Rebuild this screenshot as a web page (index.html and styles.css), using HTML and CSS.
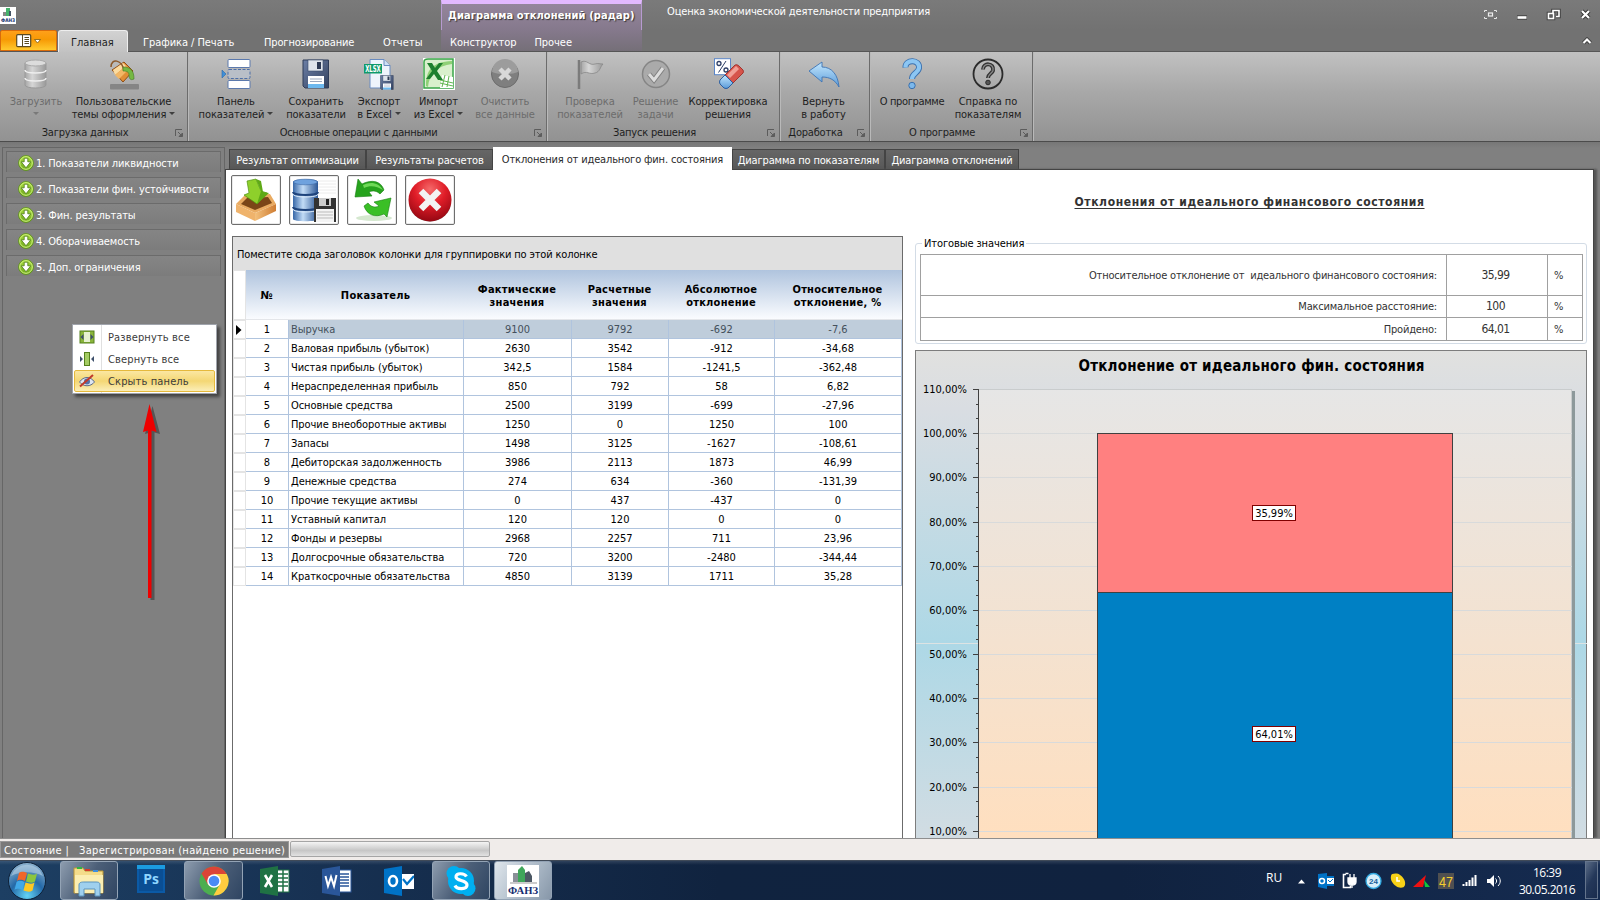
FILE: index.html
```html
<!DOCTYPE html>
<html lang="ru">
<head>
<meta charset="utf-8">
<title>Оценка экономической деятельности предприятия</title>
<link rel="stylesheet" href="styles.css">
</head>
<body>
<svg width="0" height="0" class="defs">
  <defs>
    <linearGradient id="gGreen" x1="0" y1="0" x2="0" y2="1"><stop offset="0" stop-color="#a8dc3c"/><stop offset="1" stop-color="#6fa91c"/></linearGradient>
    <linearGradient id="gBlue" x1="0" y1="0" x2="0" y2="1"><stop offset="0" stop-color="#c4e8ff"/><stop offset="1" stop-color="#5b9bd8"/></linearGradient>
    <linearGradient id="gGray" x1="0" y1="0" x2="1" y2="0"><stop offset="0" stop-color="#a6a6a6"/><stop offset=".35" stop-color="#d6d6d6"/><stop offset="1" stop-color="#9a9a9a"/></linearGradient>
    <linearGradient id="gDb" x1="0" y1="0" x2="1" y2="0"><stop offset="0" stop-color="#3767a8"/><stop offset=".4" stop-color="#c2dcf6"/><stop offset="1" stop-color="#2c5796"/></linearGradient>
    <linearGradient id="gSave" x1="0" y1="0" x2="1" y2="1"><stop offset="0" stop-color="#6c7fa6"/><stop offset="1" stop-color="#34425f"/></linearGradient>
    <linearGradient id="gBox" x1="0" y1="0" x2="1" y2="0"><stop offset="0" stop-color="#f3c07c"/><stop offset="1" stop-color="#cf7d33"/></linearGradient>
    <radialGradient id="gRed" cx=".5" cy=".25" r=".8"><stop offset="0" stop-color="#f56a6a"/><stop offset=".45" stop-color="#e01d28"/><stop offset="1" stop-color="#8c0510"/></radialGradient>
    <radialGradient id="gOrb" cx=".5" cy=".9" r=".9"><stop offset="0" stop-color="#63d4f5"/><stop offset=".5" stop-color="#2469a8"/><stop offset="1" stop-color="#8fb4cf"/></radialGradient>
    <symbol id="plus" viewBox="0 0 16 16"><circle cx="8" cy="8" r="7.400" fill="url(#gGreen)" stroke="#5b9310" stroke-width=".8"/><circle cx="8" cy="8" r="6.300" fill="none" stroke="#d3f287"/><path d="M6.200 3.200h3.600v3.600h3L8 12.800 3.200 6.800h3z" fill="#fff" stroke="#4c7a16" stroke-width=".8"/></symbol>
    <symbol id="dlg" viewBox="0 0 8 8"><path d="M.5 7V.5H7" fill="none" stroke="#5c5c5c"/><path d="M3 3l4 4M7.500 4v3.500H4z" stroke="#5c5c5c" fill="#5c5c5c"/></symbol>
    <symbol id="floppy" viewBox="0 0 28 30"><path d="M1 1h25.500v28H3l-2-2z" fill="url(#gSave)" stroke="#2f3c58"/><rect x="6" y="1" width="15" height="11" fill="#dfe4ec" stroke="#3b4a6a" stroke-width=".6"/><rect x="15" y="3" width="4" height="7" fill="#2d3a55"/><rect x="6" y="17" width="16" height="12" fill="#fff"/><rect x="6" y="25" width="16" height="4" fill="#6cb8ee"/><path d="M8 20h12M8 22.500h12" stroke="#9aa7bd"/></symbol>
  </defs>
</svg>

<div class="app">
  <header class="titlebar">
    <div class="logo"><svg width="16" height="17" viewBox="0 0 16 17"><rect width="16" height="17" fill="#fff"/><rect x="3" y="5" width="3" height="4" fill="#888"/><rect x="6" y="1" width="4" height="8" fill="#45b36b"/><rect x="9" y="4" width="2" height="5" fill="#456"/><text x="1" y="14.500" class="logo-t" textLength="14" lengthAdjust="spacingAndGlyphs">ФАНЗ</text></svg></div>
    <div class="ctx">Диаграмма отклонений (радар)</div>
    <div class="apptitle">Оценка экономической деятельности предприятия</div>
    <div class="winbtns">
      <svg width="110" height="14" viewBox="0 0 110 14" fill="none" stroke="#fff">
        <path d="M.5 4V2.500H3M10 2.500h2.500V4M.5 9v1.500H3M10 10.500h2.500V9" stroke="#e6e6e6"/><rect x="4.500" y="5" width="4" height="3" stroke="#eee" stroke-width="1.200"/>
        <path d="M33 9.500h10" stroke="#444" stroke-width="4.500"/><path d="M33.500 9.500h9" stroke-width="2.600"/>
        <path d="M69 5V2.500h6v6h-3M64.500 5.500h5v5h-5z" stroke="#444" stroke-width="3.600"/><path d="M69 5V2.500h6v6h-3" stroke-width="1.600"/><rect x="64.500" y="5.500" width="5" height="5" stroke-width="1.600"/>
        <path d="M98 3l7 7M105 3l-7 7" stroke="#333" stroke-width="4"/><path d="M98 3l7 7M105 3l-7 7" stroke-width="2.200"/>
      </svg>
    </div>
  </header>
  <nav class="tabs">
    <div class="filebtn"><svg width="26" height="14" viewBox="0 0 26 14"><rect x=".7" y=".7" width="14" height="12" rx="1" fill="#fff" stroke="#5b4a20" stroke-width="1.200"/><path d="M6.500 1v12" stroke="#5b4a20"/><path d="M8.500 3.500h4.500M8.500 5.500h4.500M8.500 7.500h4.500M8.500 9.500h4.500" stroke="#5b4a20"/><path d="M18.500 5.500h6L21.500 9z" fill="#fff" stroke="#7a5a10" stroke-width=".8"/></svg></div>
    <div class="tab on t1">Главная</div>
    <div class="tab t2">Графика / Печать</div>
    <div class="tab t3">Прогнозирование</div>
    <div class="tab t4">Отчеты</div>
    <div class="ctxtabs"><span>Конструктор</span><span>Прочее</span></div>
    <svg class="collapse" width="10" height="8" viewBox="0 0 10 8"><path d="M1.500 6L5 2.500 8.500 6" fill="none" stroke="#444" stroke-width="4"/><path d="M1.500 6L5 2.500 8.500 6" fill="none" stroke="#fff" stroke-width="2"/></svg>
  </nav>

  <section class="ribbon">
    <div class="grp g1">
      <div class="btns">
        <div class="rb off w60"><svg width="32" height="32" viewBox="0 0 32 32"><path d="M5 5v22c0 4 21 4 21 0V5z" fill="url(#gGray)" stroke="#999"/><ellipse cx="15.500" cy="5" rx="10.500" ry="3" fill="#dcdcdc" stroke="#aaa"/><path d="M5 12c0 4 21 4 21 0M5 20c0 4 21 4 21 0" fill="none" stroke="#eee" stroke-width="1.500"/></svg><span>Загрузить</span><span><i class="dd"></i></span></div>
        <div class="rb w115"><svg width="32" height="32" viewBox="0 0 32 32"><rect x="2" y="26" width="29" height="5.500" rx="1" fill="#858585"/><path d="M4 12L16 4l9 9-10 11z" fill="#e08e36" stroke="#8f4f16"/><path d="M5 12l10-7 3 3-11 9z" fill="#fbdba0"/><path d="M7 17l11-9 3 3-10 10z" fill="#f2b766"/><path d="M3 9c0-9 11-8 13 4" fill="none" stroke="#8d5a2c" stroke-width="1.500"/><path d="M15 9c8 0 11 4 11 12-4 2-5-1-5-4 0-3-2-4-6-4z" fill="#75b843" stroke="#3f7b22" stroke-width=".6"/></svg><span>Пользовательские</span><span>темы оформления <i class="dd"></i></span></div>
      </div>
      <div class="gl"><b>Загрузка данных</b><svg width="8" height="8"><use href="#dlg"/></svg></div>
    </div>
    <div class="grp g2">
      <div class="btns">
        <div class="rb w88"><svg width="32" height="32" viewBox="0 0 32 32"><rect x="8" y="1.500" width="22" height="8" rx="1" fill="#fff" stroke="#5b79ad"/><rect x="8" y="11.500" width="22" height="9" rx="1" fill="#b9bfc8" stroke="#4d6fa8" stroke-dasharray="3 1.500"/><rect x="8" y="22.500" width="22" height="8" rx="1" fill="#fff" stroke="#5b79ad"/><path d="M2 12l4 4-4 4z" fill="#3f8fd8" stroke="#2c68a8" stroke-width=".6"/></svg><span>Панель</span><span>показателей <i class="dd"></i></span></div>
        <div class="rb w72"><svg width="32" height="32" viewBox="0 0 32 32"><use href="#floppy" x="2" y="1" width="28" height="30"/></svg><span>Сохранить</span><span>показатели</span></div>
        <div class="rb w54"><svg width="32" height="32" viewBox="0 0 32 32"><path d="M7 1.500h14l6 6V30H7z" fill="#eef4fc" stroke="#6a8cc0"/><path d="M21 1.500v6h6" fill="#cfe0f5" stroke="#6a8cc0"/><rect x="1" y="6" width="18" height="9.500" fill="#119a6b"/><text x="2.200" y="14" class="xlsx" textLength="15.500" lengthAdjust="spacingAndGlyphs">XLSX</text><use href="#floppy" x="17" y="17" width="14" height="15"/></svg><span>Экспорт</span><span>в Excel <i class="dd"></i></span></div>
        <div class="rb w65"><svg width="32" height="32" viewBox="0 0 32 32"><rect width="32" height="32" fill="#fff"/><path d="M1 30V4C1 2 3 1 5 1h25v29z" fill="#d9f0cd" stroke="#39a548" stroke-width="1.500"/><path d="M3 28C3 12 9 4 29 3v3C14 8 6 16 5 29z" fill="#8fd077"/><path d="M19 17l11 2v11H17z" fill="#fff"/><path d="M17 22l13 3M17 25l13 3M22 17l-3 12M26 18l-2 11" stroke="#5fb550"/><path d="M4 5h5l3 5 4-5h4l-6 8 6 9h-5l-4-6-4 5H3l6-8z" fill="#1d7f2e"/></svg><span>Импорт</span><span>из Excel <i class="dd"></i></span></div>
        <div class="rb off w68"><svg width="32" height="32" viewBox="0 0 32 32"><circle cx="16" cy="16" r="13.500" fill="#7f7f7f" stroke="#6b6b6b"/><path d="M3 14a13 13 0 0 1 26 0c-8 3-18 3-26 0z" fill="#9c9c9c"/><path d="M11 11l10 10M21 11L11 21" stroke="#d8d8d8" stroke-width="4.500"/></svg><span>Очистить</span><span>все данные</span></div>
      </div>
      <div class="gl"><b>Основные операции с данными</b><svg width="8" height="8"><use href="#dlg"/></svg></div>
    </div>
    <div class="grp g3">
      <div class="btns">
        <div class="rb off w74"><svg width="32" height="32" viewBox="0 0 32 32"><path d="M5 2v29" stroke="#7b7b7b" stroke-width="2.500"/><path d="M7 4c6-3 8 4 14 2 3-1 5 0 8 0-3 3-3 8-8 9-6 2-8-3-14 1z" fill="url(#gGray)" stroke="#888" stroke-width=".8"/></svg><span>Проверка</span><span>показателей</span></div>
        <div class="rb off w57"><svg width="32" height="32" viewBox="0 0 32 32"><circle cx="16" cy="16" r="13.500" fill="#aaa" stroke="#858585" stroke-width="1.500"/><path d="M9 16l5 6 9-12" fill="none" stroke="#7f7f7f" stroke-width="5"/><path d="M9 16l5 6 9-12" fill="none" stroke="#dcdcdc" stroke-width="3"/></svg><span>Решение</span><span>задачи</span></div>
        <div class="rb w88"><svg width="32" height="32" viewBox="0 0 32 32"><rect x="2.500" y=".7" width="16" height="16" fill="#fff" stroke="#5b86c8"/><circle cx="7" cy="5.500" r="2" fill="none" stroke="#2e3f66" stroke-width="1.300"/><circle cx="14" cy="12" r="2" fill="none" stroke="#2e3f66" stroke-width="1.300"/><path d="M14 3L6.500 14.500" stroke="#2e3f66"/><path d="M13 17L23 7q2-1 4 1l4 4q1 2 0 3L21 25z" fill="#d6544b" stroke="#a13530"/><path d="M15 17l9-9 3 3-9 9z" fill="#f0a097"/><path d="M13 17l8 8-5 5q-2 1-4 0l-4-4q-1-2 0-4z" fill="url(#gBlue)" stroke="#2c5ea0"/></svg><span>Корректировка</span><span>решения</span></div>
      </div>
      <div class="gl"><b>Запуск решения</b><svg width="8" height="8"><use href="#dlg"/></svg></div>
    </div>
    <div class="grp g4">
      <div class="btns">
        <div class="rb w77"><svg width="32" height="32" viewBox="0 0 32 32"><path d="M1 13L14 4v5c10 0 16 8 17 20-4-7-9-10-17-10v5z" fill="url(#gBlue)" stroke="#3d74b4" stroke-width=".9"/></svg><span>Вернуть</span><span>в работу</span></div>
      </div>
      <div class="gl"><b>Доработка</b><svg width="8" height="8"><use href="#dlg"/></svg></div>
    </div>
    <div class="grp g5">
      <div class="btns">
        <div class="rb w74 tight"><svg width="32" height="32" viewBox="0 0 32 32"><path d="M9.500 9.500C9 1 24 1 23 10c-.5 5-7 5-7 11" fill="none" stroke="#3a70ae" stroke-width="6"/><path d="M9.500 9.500C9 1 24 1 23 10c-.5 5-7 5-7 11" fill="none" stroke="#8cc6f3" stroke-width="4.200"/><circle cx="16" cy="27.500" r="3.200" fill="#7bb8ec" stroke="#3a70ae"/></svg><span>О программе</span><span></span></div>
        <div class="rb w78"><svg width="32" height="32" viewBox="0 0 32 32"><circle cx="16" cy="16" r="14.500" fill="none" stroke="#2b2b2b" stroke-width="1.800"/><path d="M11 11.500C11 4 22.500 5 21 12.500c-.7 3-5 3.500-5 7.500" fill="none" stroke="#333" stroke-width="4"/><path d="M11 11.500C11 4 22.500 5 21 12.500c-.7 3-5 3.500-5 7.500" fill="none" stroke="#8a8a8a" stroke-width="1.300"/><circle cx="16" cy="24.500" r="2.300" fill="#555" stroke="#2b2b2b"/></svg><span>Справка по</span><span>показателям</span></div>
      </div>
      <div class="gl"><b>О программе</b><svg width="8" height="8"><use href="#dlg"/></svg></div>
    </div>
  </section>

  <main class="work">
    <aside class="side">
      <div class="si"><svg width="16" height="16"><use href="#plus"/></svg>1. Показатели ликвидности</div>
      <div class="si"><svg width="16" height="16"><use href="#plus"/></svg>2. Показатели фин. устойчивости</div>
      <div class="si"><svg width="16" height="16"><use href="#plus"/></svg>3. Фин. результаты</div>
      <div class="si"><svg width="16" height="16"><use href="#plus"/></svg>4. Оборачиваемость</div>
      <div class="si"><svg width="16" height="16"><use href="#plus"/></svg>5. Доп. ограничения</div>
    </aside>
    <div class="content">
      <div class="dtabs">
        <div class="dt d1">Результат оптимизации</div><div class="dt d2">Результаты расчетов</div><div class="dt on d3">Отклонения от идеального фин. состояния</div><div class="dt d4">Диаграмма по показателям</div><div class="dt d5">Диаграмма отклонений</div>
      </div>
      <div class="page">
        <div class="left">
          <div class="tools">
            <div class="tb"><svg width="44" height="44" viewBox="0 0 44 44"><path d="M2 26l9-9 25-1 6 10-21 9z" fill="#e9ab62"/><path d="M7 26l6-6 21-1 4 6-17 7z" fill="#7a4518"/><path d="M2 26l19 9v8L2 34z" fill="#efb36c"/><path d="M42 26l-21 9v8l21-10z" fill="url(#gBox)"/><path d="M13 3l9-2 5 12 6 2-10 11-13-9 5-2z" fill="#8ed02b" stroke="#4f9211" stroke-width=".7"/><path d="M22 1l5 2 2 11 6 1-12 11 4-13z" fill="#5fa916"/></svg></div>
            <div class="tb"><svg width="44" height="44" viewBox="0 0 44 44"><path d="M26 3h18M26 6h18M26 9h18M26 12h18M26 15h18" stroke="#ececec"/><path d="M1 4c0-4 25-4 25 0v37c0 3-25 3-25 0z" fill="url(#gDb)"/><ellipse cx="13.500" cy="4" rx="12" ry="2.800" fill="#6fa2de" stroke="#3a68a6" stroke-width=".6"/><path d="M1 14c0 4 25 4 25 0M1 29c0 4 25 4 25 0" fill="none" stroke="#1f447c" stroke-width="2"/><path d="M1 16c0 4 25 4 25 0M1 31c0 4 25 4 25 0" fill="none" stroke="#dcebfa"/><path d="M22 20h22v24H22z" fill="#333"/><rect x="27" y="20" width="12" height="8" fill="#ccc"/><rect x="34" y="21" width="3" height="6" fill="#222"/><rect x="24" y="31" width="18" height="13" fill="#f4f4f4"/><path d="M25 34h16M25 37h16M25 40h16" stroke="#bbb"/></svg></div>
            <div class="tb"><svg width="44" height="44" viewBox="0 0 44 44"><ellipse cx="24" cy="40" rx="18" ry="3" fill="#d5e8cf"/><path d="M8 1l4 5c10-5 19-3 22 6l-4 4c-3-3-7-4-11-2l3 4-17 1z" fill="#26a31c" stroke="#157d10" stroke-width=".6"/><path d="M37 39l-3-3c-9 4-17 1-20-8l4-3c3 4 7 5 11 3l-5-4 17-4z" fill="#3abf26" stroke="#157d10" stroke-width=".6"/><path d="M13 7c8-4 16-2 20 5-6-4-13-5-19-2z" fill="#6fd957"/></svg></div>
            <div class="tb"><svg width="44" height="44" viewBox="0 0 44 44"><ellipse cx="22" cy="24" rx="21" ry="19.500" fill="#222" opacity=".55"/><circle cx="22" cy="22" r="21.500" fill="url(#gRed)"/><path d="M13 13l18 18M31 13L13 31" stroke="#f3f3f3" stroke-width="6.500"/></svg></div>
          </div>
          <div class="grid">
            <div class="gpanel">Поместите сюда заголовок колонки для группировки по этой колонке</div>
            <table class="gt">
              <colgroup><col class="c0"><col class="c1"><col class="c2"><col class="c3"><col class="c4"><col class="c5"><col class="c6"></colgroup>
              <thead><tr><th class="ind"></th><th>№</th><th>Показатель</th><th>Фактические<br>значения</th><th>Расчетные<br>значения</th><th>Абсолютное<br>отклонение</th><th>Относительное<br>отклонение, %</th></tr></thead>
              <tbody>
                <tr class="sel"><td class="ind"><svg width="6" height="10" viewBox="0 0 6 10"><path d="M0 0l5.500 5L0 10z"/></svg></td><td>1</td><td>Выручка</td><td>9100</td><td>9792</td><td>-692</td><td>-7,6</td></tr>
                <tr><td class="ind"></td><td>2</td><td>Валовая прибыль (убыток)</td><td>2630</td><td>3542</td><td>-912</td><td>-34,68</td></tr>
                <tr><td class="ind"></td><td>3</td><td>Чистая прибыль (убыток)</td><td>342,5</td><td>1584</td><td>-1241,5</td><td>-362,48</td></tr>
                <tr><td class="ind"></td><td>4</td><td>Нераспределенная прибыль</td><td>850</td><td>792</td><td>58</td><td>6,82</td></tr>
                <tr><td class="ind"></td><td>5</td><td>Основные средства</td><td>2500</td><td>3199</td><td>-699</td><td>-27,96</td></tr>
                <tr><td class="ind"></td><td>6</td><td>Прочие внеоборотные активы</td><td>1250</td><td>0</td><td>1250</td><td>100</td></tr>
                <tr><td class="ind"></td><td>7</td><td>Запасы</td><td>1498</td><td>3125</td><td>-1627</td><td>-108,61</td></tr>
                <tr><td class="ind"></td><td>8</td><td>Дебиторская задолженность</td><td>3986</td><td>2113</td><td>1873</td><td>46,99</td></tr>
                <tr><td class="ind"></td><td>9</td><td>Денежные средства</td><td>274</td><td>634</td><td>-360</td><td>-131,39</td></tr>
                <tr><td class="ind"></td><td>10</td><td>Прочие текущие активы</td><td>0</td><td>437</td><td>-437</td><td>0</td></tr>
                <tr><td class="ind"></td><td>11</td><td>Уставный капитал</td><td>120</td><td>120</td><td>0</td><td>0</td></tr>
                <tr><td class="ind"></td><td>12</td><td>Фонды и резервы</td><td>2968</td><td>2257</td><td>711</td><td>23,96</td></tr>
                <tr><td class="ind"></td><td>13</td><td>Долгосрочные обязательства</td><td>720</td><td>3200</td><td>-2480</td><td>-344,44</td></tr>
                <tr><td class="ind"></td><td>14</td><td>Краткосрочные обязательства</td><td>4850</td><td>3139</td><td>1711</td><td>35,28</td></tr>
              </tbody>
            </table>
          </div>
        </div>
        <div class="right">
          <h1>Отклонения от идеального финансового состояния</h1>
          <fieldset class="totals">
            <legend>Итоговые значения</legend>
            <div class="tt">
              <div class="tr r1"><span>Относительное отклонение от&nbsp; идеального финансового состояния:</span><b>35,99</b><i>%</i></div>
              <div class="tr r2"><span>Максимальное расстояние:</span><b>100</b><i>%</i></div>
              <div class="tr r3"><span>Пройдено:</span><b>64,01</b><i>%</i></div>
            </div>
          </fieldset>
          <svg class="chart" width="672" height="488" viewBox="915 350 672 488">
            <defs>
              <linearGradient id="bg" gradientUnits="userSpaceOnUse" x1="0" y1="350" x2="0" y2="936"><stop offset="0" stop-color="#e1e1df"/><stop offset=".1" stop-color="#d9dde2"/><stop offset=".5" stop-color="#add8e6"/><stop offset=".9" stop-color="#d9dde2"/></linearGradient>
              <linearGradient id="pl" gradientUnits="userSpaceOnUse" x1="0" y1="389" x2="0" y2="838"><stop offset="0" stop-color="#e6e6e6"/><stop offset="1" stop-color="#ffdfbf"/></linearGradient>
            </defs>
            <rect x="915.500" y="350.500" width="671" height="500" fill="url(#bg)" stroke="#7d7d7d"/>
            <path d="M916 643.500h671" stroke="#dde3e3"/>
            <rect x="1572" y="391" width="3" height="450" fill="#8d999b"/>
            <rect x="978" y="389" width="594" height="450" fill="url(#pl)"/>
            <path d="M1571.500 389v449M978 389.500h594" stroke="#c9cccd" fill="none"/>
            <path d="M978 433.500h594M978 477.500h594M978 522.500h594M978 566.500h594M978 610.500h594M978 654.500h594M978 698.500h594M978 742.500h594M978 787.500h594M978 831.500h594" stroke="#d8dadb"/>
            <rect x="1097.500" y="433.500" width="355" height="159" fill="#ff8080" stroke="#404040"/>
            <rect x="1097.500" y="592.500" width="355" height="260" fill="#0080c4" stroke="#404040"/>
            <path d="M978.500 389v449M973 389.500h5M973 433.500h5M973 477.500h5M973 522.500h5M973 566.500h5M973 610.500h5M973 654.500h5M973 698.500h5M973 742.500h5M973 787.500h5M973 831.500h5M976 404.500h2M976 418.500h2M976 448.500h2M976 463.500h2M976 492.500h2M976 507.500h2M976 536.500h2M976 551.500h2M976 580.500h2M976 595.500h2M976 625.500h2M976 639.500h2M976 669.500h2M976 684.500h2M976 713.500h2M976 728.500h2M976 757.500h2M976 772.500h2M976 801.500h2M976 816.500h2" stroke="#404040"/>
            <text x="1251.500" y="371" class="ctitle" text-anchor="middle" textLength="346">Отклонение от идеального фин. состояния</text>
            <g class="clab" text-anchor="end">
              <text x="967" y="393">110,00%</text><text x="967" y="437">100,00%</text><text x="967" y="481">90,00%</text><text x="967" y="526">80,00%</text><text x="967" y="570">70,00%</text><text x="967" y="614">60,00%</text><text x="967" y="658">50,00%</text><text x="967" y="702">40,00%</text><text x="967" y="746">30,00%</text><text x="967" y="791">20,00%</text><text x="967" y="835">10,00%</text>
            </g>
            <g fill="#fff" stroke="#800000"><rect x="1252.500" y="505.500" width="43" height="15"/><rect x="1252.500" y="726.500" width="43" height="15"/></g>
            <g class="clab" text-anchor="middle"><text x="1274" y="517">35,99%</text><text x="1274" y="738">64,01%</text></g>
          </svg>
        </div>
      </div>
    </div>
  </main>

  <footer class="status">
    <div class="st"><span>Состояние |</span><span>Зарегистрирован (найдено решение)</span></div>
    <div class="prog"></div>
  </footer>

  <div class="taskbar">
    <div class="orb"><svg width="40" height="40" viewBox="0 0 40 40"><circle cx="20" cy="20" r="18.500" fill="url(#gOrb)" stroke="#0e2138"/><path d="M4 15a17 17 0 0 1 32 0c-10-5-22-5-32 0z" fill="#cfe3ef" opacity=".45"/><path d="M12 12c3-2 5-1 8 0l-2 8c-3-1-5-2-8 0z" fill="#f0662a"/><path d="M21 12.500c3 1 6 2 9 0l-2 8c-3 2-6 1-9 0z" fill="#8cc63e"/><path d="M9.500 21c3-2 5-1 8 0l-2 8c-3-1-5-2-8 0z" fill="#41a8e8"/><path d="M18.500 21.500c3 1 6 2 9 0l-2 8c-3 2-6 1-9 0z" fill="#fdc823"/></svg></div>
    <div class="tk open k1"><svg width="34" height="32" viewBox="0 0 34 32"><path d="M2 3h9l2 3h18v22H2z" fill="#f4dc8a" stroke="#b99536"/><path d="M3 10h28v18H3z" fill="#fbeeb2"/><rect x="5" y="2" width="5" height="2" fill="#31b442"/><rect x="13" y="4" width="5" height="2" fill="#d43c2c"/><rect x="21" y="5" width="5" height="2" fill="#3d8fe0"/><path d="M7 31V20c0-3 3-3 5-3h11c3 0 5 0 5 3v11h-5v-7H12v7z" fill="#9fd0ee" stroke="#5a93bd"/></svg></div>
    <div class="tk k2"><svg width="28" height="28" viewBox="0 0 28 28"><rect width="28" height="28" fill="#0b5aa6"/><rect x="2" y="3" width="24" height="23" fill="#0a4e93"/><path d="M0 0h28v4H0z" fill="#1b9be0"/><text x="14" y="19" text-anchor="middle" class="ps">Ps</text></svg></div>
    <div class="tk open k3"><svg width="30" height="30" viewBox="0 0 30 30"><circle cx="15" cy="15" r="14.500" fill="#4cae50"/><path d="M15 15L2.500 7.500A14.500 14.500 0 0 1 27.600 8H15z" fill="#db4437"/><path d="M15 8h12.700A14.500 14.500 0 0 1 14.500 29.500L21 18z" fill="#ffcd40"/><path d="M2.500 7.500L9 18.500 15 15V8z" fill="#db4437"/><circle cx="15" cy="15" r="6.800" fill="#fff"/><circle cx="15" cy="15" r="5.300" fill="#4a8af4"/></svg></div>
    <div class="tk k4"><svg width="30" height="30" viewBox="0 0 30 30"><rect x="17" y="4" width="12" height="22" fill="#fff" stroke="#1f7244"/><path d="M18 8h10M18 12h10M18 16h10M18 20h10M23 4v22" stroke="#1f7244" stroke-width="1.500"/><path d="M0 3l18-3v30L0 27z" fill="#1f7244"/><path d="M5 9l7 12M12 9L5 21" stroke="#fff" stroke-width="2.600"/></svg></div>
    <div class="tk k5"><svg width="30" height="30" viewBox="0 0 30 30"><rect x="17" y="4" width="12" height="22" fill="#fff" stroke="#2a5699"/><path d="M18 8h9M18 11h9M18 14h9M18 17h9M18 20h9" stroke="#2a5699" stroke-width="1.300"/><path d="M0 3l18-3v30L0 27z" fill="#2a5699"/><path d="M3.500 10l2.500 10 3-9 3 9 2.500-11" fill="none" stroke="#fff" stroke-width="2"/></svg></div>
    <div class="tk k6"><svg width="30" height="30" viewBox="0 0 30 30"><path d="M17 8h13v15H17z" fill="#fff"/><path d="M19 13l4 5 7-8" fill="none" stroke="#0072c6" stroke-width="2.200"/><path d="M0 3l18-3v30L0 27z" fill="#0072c6"/><ellipse cx="9" cy="15" rx="4" ry="5" fill="none" stroke="#fff" stroke-width="2.600"/></svg></div>
    <div class="tk open k7"><svg width="30" height="32" viewBox="0 0 30 32"><circle cx="15" cy="16" r="13" fill="#00aff0"/><circle cx="8" cy="8.500" r="7.500" fill="#00aff0"/><circle cx="22" cy="23.500" r="7.500" fill="#00aff0"/><path d="M20.500 11.500C18 7.500 9.500 8 10 12c.5 4.500 11 2.500 11 8 0 4.500-10 5-12 .5" fill="none" stroke="#fff" stroke-width="3.200"/></svg></div>
    <div class="tk open act k8"><svg width="32" height="32" viewBox="0 0 32 32"><rect width="32" height="32" fill="#fff"/><rect x="6" y="8" width="5" height="9" fill="#8a9098"/><path d="M11 5l4-4 3 4v12h-7z" fill="#3fa65a"/><path d="M18 17V8l4-2 3 5v6z" fill="#4b5763"/><path d="M3 18h27" stroke="#999"/><text x="1" y="29" class="fanz" textLength="30" lengthAdjust="spacingAndGlyphs">ФАНЗ</text></svg></div>
    <div class="tray">
      <span class="lang">RU</span>
      <svg width="206" height="20" viewBox="0 0 206 20">
        <path d="M2 12.500h7L5.500 8.500z" fill="#fff"/>
        <path d="M22 3l9-1v16l-9-2z" fill="#0072c6"/><rect x="31" y="5" width="7" height="10" fill="#0072c6"/><circle cx="26" cy="10" r="2.500" fill="none" stroke="#fff" stroke-width="1.500"/><path d="M31 7h7v6h-7z" fill="#fff"/><path d="M32 9l2 2 3-3" fill="none" stroke="#0072c6"/>
        <path d="M50 3.500h-2.500v13h7v-2M49.500 2.500h3" fill="none" stroke="#fff" stroke-width="1.600"/><path d="M52 7h8v4c0 4-8 4-8 0zM54 3v4M58 3v4M56 13v4" fill="#fff" stroke="#fff" stroke-width="1.300"/>
        <circle cx="77.500" cy="10" r="7.500" fill="#d8effa" stroke="#31a8e0" stroke-width="1.300"/><text x="77.500" y="13" text-anchor="middle" class="t24">24</text>
        <path d="M95 5c0-3 7-3 9-1 3 2 6 6 5 10-1 4-7 3-9 1-3-2-6-6-5-10z" fill="#f7d117"/><path d="M101 6v4h3" stroke="#fff" stroke-width="1.500" fill="none"/>
        <path d="M117 16h10l3-12z" fill="#ee1010"/><path d="M128 9l6 7h-5z" fill="#12c93a"/>
        <rect x="142" y="2" width="16" height="16" fill="#505050"/><text x="150" y="15.500" text-anchor="middle" class="t47" textLength="14" lengthAdjust="spacingAndGlyphs">47</text>
        <path d="M167.500 13v2M170.500 11v4M173.500 9v6M176.500 6.500v8.500M179.500 4v11" stroke="#fff" stroke-width="2"/>
        <path d="M191 8h3l4-4v12l-4-4h-3z" fill="#fff"/><path d="M199.500 7.500c1.500 1.500 1.500 3.500 0 5M202 5c3 3 3 7 0 10" fill="none" stroke="#fff"/>
      </svg>
      <div class="clock">16:39<br>30.05.2016</div>
      <div class="desk"></div>
    </div>
  </div>

  <div class="menu">
    <div class="mi"><svg width="16" height="16" viewBox="0 0 16 16"><rect x="1" y="2" width="14" height="12" fill="#8ab53c" stroke="#55801c"/><rect x="5" y="3" width="6" height="10" fill="#e6f2cf"/><path d="M4.500 5v6L1.500 8zM11.500 5v6l3-3z" fill="#3d4f6b"/></svg><span>Развернуть все</span></div>
    <div class="mi"><svg width="16" height="16" viewBox="0 0 16 16"><rect x="5.500" y="1.500" width="5" height="13" fill="#a4cc63" stroke="#55801c"/><path d="M1 5v6l3-3zM15 5v6l-3-3z" fill="#3d4f6b"/></svg><span>Свернуть все</span></div>
    <div class="mi hot"><svg width="16" height="16" viewBox="0 0 16 16"><path d="M.5 9c4-6 11-6 15 0-4 5-11 5-15 0z" fill="#dfe6f2" stroke="#5d6c88"/><circle cx="8" cy="8.500" r="3" fill="#5471a8"/><path d="M1 13.500L14 2" stroke="#c0392b" stroke-width="2"/></svg><span>Скрыть панель</span></div>
  </div>
  <svg class="arrow" width="26" height="202" viewBox="0 0 26 202"><path d="M12.500 0L5 28l5.500-1.500V194h4V26.500l5.500 1.500z" fill="#222" opacity=".45" transform="translate(3 2)"/><path d="M12.500 0L6 28l5-1.500V194h3.500V26.500l5 1.500z" fill="#ee0000"/></svg>
</div>
</body>
</html>
```
FILE: styles.css
```css
* { box-sizing: border-box; }
body { margin: 0; font-family: "DejaVu Sans Condensed", "DejaVu Sans", sans-serif; font-stretch: condensed; font-size: 11px; line-height: 13px; color: #000; }
svg { display: block; flex: none; }
.defs { position: absolute; }
.app { position: relative; width: 1600px; height: 900px; overflow: hidden; background: #808080; display: flex; flex-direction: column; white-space: nowrap; }

.titlebar { height: 30px; display: flex; background: linear-gradient(#7a7a7a, #727272); color: #fff; }
.logo { width: 441px; padding-top: 7px; }
.logo-t { font-size: 5px; font-weight: bold; fill: #14306e; }
.ctx { width: 201px; border-top: 4px solid #e2b8ff; border-left: 1px solid #b79bd0; border-right: 1px solid #b79bd0; background: linear-gradient(#94859c, #85798c); padding: 5px 0 0 6px; font-weight: bold; text-shadow: 1px 1px 1px #333; letter-spacing: .12px; }
.apptitle { padding: 5px 0 0 25px; letter-spacing: -.16px; }
.winbtns { margin: 8px 6px 0 auto; }

.tabs { height: 22px; display: flex; background: #727272; color: #fff; border-bottom: 1px solid #565656; line-height: 25px; }
.filebtn { width: 57px; height: 21px; background: linear-gradient(#ffa01a, #f79a05 45%, #ffc92e); border: 1px solid #d96b0a; border-radius: 2px 2px 0 0; padding: 3px 0 0 15px; }
.tab.on { height: 22px; background: linear-gradient(#d2d2d2, #c2c2c2); color: #1e1e1e; border: 1px solid #eee; border-bottom: 0; border-radius: 3px 3px 0 0; line-height: 23px; }
.t1 { margin-left: 1px; width: 70px; padding-left: 12px; }
.t2 { width: 121px; padding-left: 15px; letter-spacing: -.05px; }
.t3 { width: 119px; padding-left: 15px; letter-spacing: -.15px; }
.t4 { width: 73px; padding-left: 15px; letter-spacing: .1px; }
.ctxtabs { width: 201px; padding-left: 9px; display: flex; gap: 18px; background: linear-gradient(#85798c, #756f78); letter-spacing: -.05px; }
.collapse { margin: 7px 8px 0 auto; }

.ribbon { height: 90px; display: flex; background: linear-gradient(#c1c1c1, #a8a8a8 45%, #929292); border-bottom: 1px solid #4c4c4c; color: #1e1e1e; }
.grp { height: 89px; border-right: 1px solid #6c6c6c; box-shadow: 1px 0 0 #b9b9b9; display: flex; flex-direction: column; }
.g1 { width: 188px; padding-left: 6px; }
.g2 { width: 359px; padding-left: 4px; }
.g3 { width: 233px; padding-left: 6px; }
.g4 { width: 90px; padding-left: 5px; }
.g5 { width: 163px; padding-left: 5px; }
.btns { display: flex; height: 74px; letter-spacing: -.08px; }
.rb { display: flex; flex-direction: column; align-items: center; padding-top: 6px; }
.rb svg { margin-bottom: 5px; }
.rb span { height: 13px; }
.tight { letter-spacing: -.35px; }
.off { color: #6c6c6c; }
.w54 { width: 54px; } .w57 { width: 57px; } .w60 { width: 60px; } .w65 { width: 65px; } .w68 { width: 68px; } .w72 { width: 72px; } .w74 { width: 74px; } .w77 { width: 77px; } .w78 { width: 78px; } .w88 { width: 88px; } .w115 { width: 115px; }
.dd { display: inline-block; border: 3px solid transparent; border-top-color: currentColor; border-bottom: 0; vertical-align: 3px; opacity: .75; }
.gl { display: flex; align-items: center; padding-right: 4px; }
.gl b { font-weight: normal; flex: 1; text-align: center; padding-right: 11px; letter-spacing: -.2px; }
.g2 .gl b { padding-right: 9px; letter-spacing: -.27px; }

.work { flex: none; height: 696px; padding-top: 5px; display: flex; background: linear-gradient(#777, #808080 6px, #808080); }
.side { width: 223px; margin-left: 2px; border: 1px solid #666; border-bottom: 0; padding: 3px 3px; display: flex; flex-direction: column; gap: 5px; color: #fff; letter-spacing: -.1px; }
.si { height: 21px; border: 1px solid #6b6b6b; border-bottom: 0; background: linear-gradient(#858585, #7c7c7c); display: flex; align-items: center; padding: 2px 0 0 11px; gap: 2px; }
.content { width: 1373px; display: flex; flex-direction: column; }
.dtabs { height: 22px; display: flex; align-items: flex-end; padding-left: 4px; color: #fff; letter-spacing: -.15px; }
.dt { height: 20px; border: 1px solid #444; border-bottom: 0; background: linear-gradient(#666, #585858); line-height: 21px; text-align: center; }
.dt.on { height: 23px; margin-bottom: -1px; background: #fff; color: #2a2a2a; border: 0; line-height: 25px; z-index: 1; }
.d1 { width: 137px; } .d2 { width: 127px; } .d3 { width: 239px; } .d4 { width: 153px; } .d5 { width: 134px; }
.page { width: 1369px; height: 669px; background: #fff; border: 1px solid #444; border-width: 1px 1px 0 1px; box-shadow: 3px 0 2px #555; display: flex; }
.left { width: 677px; padding: 5px 0 0 5px; }
.tools { display: flex; gap: 8px; }
.tb { width: 50px; height: 50px; border: 1px solid #6e6e6e; border-radius: 2px; background: #fff; padding: 2px; box-shadow: inset 0 0 0 1px #eaeaea; }
.grid { margin: 11px 0 0 1px; width: 671px; height: 603px; border: 1px solid #6b6b6b; border-bottom: 0; }
.gpanel { height: 33px; background: #e0e0e0; padding: 11px 0 0 4px; letter-spacing: -.15px; }
.gt { table-layout: fixed; width: 669px; border-collapse: separate; border-spacing: 0; }
.c0 { width: 13px; } .c1 { width: 43px; } .c2 { width: 175px; } .c3 { width: 108px; } .c4 { width: 97px; } .c5 { width: 106px; } .c6 { width: 127px; }
.gt th { height: 50px; padding: 2px 2px 0 0; background: linear-gradient(#b0c4de, #fafcff); border-bottom: 1px solid #e4e6ea; letter-spacing: .24px; }
.gt th.ind, .gt td.ind { background: #fff; border: 1px solid #e4e4e4; padding: 0 2px; }
.gt td { height: 19px; padding: 0; border: 1px solid #b0c4de; border-width: 0 1px 1px 0; text-align: center; line-height: 13px; }
.gt td:nth-child(3) { text-align: left; padding-left: 2px; letter-spacing: -.07px; }
.gt .sel td:nth-child(n+3) { background: #bfcddb; color: #44505c; }
.right { padding-left: 12px; width: 690px; }
h1 { margin: 25px 0 0; text-align: center; padding-right: 9px; font-size: 12px; line-height: 15px; letter-spacing: .62px; color: #333; text-decoration: underline; text-underline-offset: 2px; }
.totals { margin: 27px 0 6px; padding: 4px 3px 3px 4px; width: 672px; height: 107px; border: 1px solid #d3dce6; border-radius: 3px; min-width: 0; }
legend { padding: 0 2px; margin-left: 2px; height: 13px; letter-spacing: -.1px; }
.tt { height: 87px; border: 1px solid #a0a0a0; color: #333; }
.tr { display: grid; grid-template-columns: 525px 101px 36px; }
.tr > * { font-weight: normal; font-style: normal; display: flex; align-items: center; }
.tr span { justify-content: flex-end; padding-right: 9px; letter-spacing: -.19px; }
.tr b { justify-content: center; border-left: 1px solid #a0a0a0; font-size: 12px; letter-spacing: -.6px; padding-right: 3px; }
.tr i { border-left: 1px solid #a0a0a0; padding-left: 6px; }
.r1 { height: 41px; border-bottom: 1px solid #a0a0a0; } .r2 { height: 22px; border-bottom: 1px solid #a0a0a0; } .r3 { height: 22px; }
.ctitle { font-size: 15px; font-weight: bold; }
.clab { font-size: 11px; }

.status { height: 22px; border-top: 1px solid #8e8e8e; background: #f0ecea; display: flex; padding-top: 2px; }
.st { width: 289px; height: 17px; background: #7a7a7a; color: #fff; border: 1px solid #999; padding: 1px 0 0 3px; display: flex; gap: 10px; letter-spacing: .31px; line-height: 15px; }
.prog { margin-left: 1px; width: 200px; height: 16px; border: 1px solid #a5a5a5; border-radius: 2px; background: linear-gradient(#f4f4f4, #d2d2d2 45%, #c6c6c6 60%, #e2e2e2); }

.taskbar { height: 40px; border-top: 1px solid #404a58; background: linear-gradient(rgba(255,255,255,.12), rgba(255,255,255,0) 4px), linear-gradient(90deg, #1d3f63, #173152 20%, #10233f 45%, #10223f 70%, #152b50); display: flex; }
.orb { width: 60px; padding-left: 7px; }
.tk { height: 39px; display: flex; align-items: center; justify-content: center; }
.open { border: 1px solid #93a3b5; border-radius: 3px; background: linear-gradient(120deg, #8d9cae, #4c5f78 50%, #2f4562); }
.act { background: linear-gradient(120deg, #dfe6ec, #a9b7c5 60%, #8797a9); }
.k1 { width: 58px; } .k2 { width: 28px; margin-left: 19px; padding-bottom: 4px; } .k3 { width: 59px; margin-left: 19px; } .k4 { width: 30px; margin-left: 17px; } .k5 { width: 30px; margin-left: 32px; } .k6 { width: 30px; margin-left: 32px; } .k7 { width: 58px; margin-left: 18px; } .k8 { width: 58px; margin-left: 4px; }
.ps { font: bold 14px "Open Sans", sans-serif; fill: #8fd6ff; }
.fanz { font: bold 11px "Liberation Serif", serif; fill: #162d70; }
.xlsx { font-size: 8px; font-weight: bold; fill: #fff; }
.t24 { font: bold 8px "Liberation Sans", sans-serif; fill: #1a5f9a; }
.t47 { font: 14px "Liberation Sans", sans-serif; fill: #f3cf2e; }
.tray { margin-left: auto; display: flex; color: #fff; padding-top: 10px; }
.lang { width: 30px; font: 12px "Open Sans", sans-serif; line-height: 14px; }
.clock { margin: -7px 0 0 15px; width: 60px; text-align: center; font: 12px/17px "Open Sans", sans-serif; letter-spacing: -.5px; }
.desk { width: 13px; height: 38px; margin: -10px 2px 0 8px; border: 1px solid #64748c; background: linear-gradient(120deg, #5b6c86, #24385a 50%, #1a2c4d); }

.menu { position: absolute; left: 72px; top: 324px; width: 145px; height: 70px; padding: 1px 1px; background: linear-gradient(90deg, #fff 28px, #e0e0e0 28px, #e0e0e0 29px, #fff 29px); border: 1px solid #a0a4ac; box-shadow: 3px 3px 3px #444; color: #3b3b3b; letter-spacing: .14px; }
.mi { height: 22px; display: flex; align-items: center; padding-left: 4px; border: 1px solid transparent; }
.mi span { margin-left: 13px; }
.hot { border-color: #e5b93c; border-radius: 2px; background: linear-gradient(#fbe7a2, #f4d774 50%, #fbeeb8); }
.arrow { position: absolute; left: 137px; top: 404px; }
```
